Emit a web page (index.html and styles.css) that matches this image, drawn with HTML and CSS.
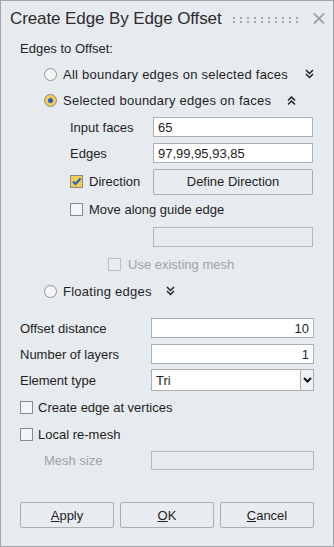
FILE: index.html
```html
<!DOCTYPE html>
<html>
<head>
<meta charset="utf-8">
<link rel="stylesheet" href="styles.css">
</head>
<body>
<div class="win">
  <div class="titlebar">
    <span class="title">Create Edge By Edge Offset</span>
    <svg class="grip" width="70" height="6" viewBox="0 0 70 6">
      <defs><pattern id="dots" width="7" height="4" patternUnits="userSpaceOnUse"><rect width="2" height="2" fill="#a3a8ad"/></pattern></defs>
      <rect width="70" height="6" fill="url(#dots)"/>
    </svg>
    <svg class="close" width="12" height="11" viewBox="0 0 12 11"><path d="M1 0.5 L11 10.5 M11 0.5 L1 10.5" stroke="#9ea3a8" stroke-width="1.8" fill="none"/></svg>
  </div>
  <div class="content">
    <div class="row section">Edges to Offset:</div>

    <div class="row radio-row r1">
      <span class="radio"></span><span class="rlabel">All boundary edges on selected faces</span>
      <svg class="chev c1" width="9" height="10" viewBox="0 0 9 10"><path d="M1 1 L4.5 4.5 L8 1 M1 5 L4.5 8.5 L8 5" stroke="#222" stroke-width="1.5" fill="none"/></svg>
    </div>
    <div class="row radio-row r2">
      <span class="radio on"></span><span class="rlabel">Selected boundary edges on faces</span>
      <svg class="chev c2" width="9" height="10" viewBox="0 0 9 10"><path d="M1 4.5 L4.5 1 L8 4.5 M1 8.5 L4.5 5 L8 8.5" stroke="#222" stroke-width="1.5" fill="none"/></svg>
    </div>

    <div class="row sub-field">
      <span class="sublabel">Input faces</span><span class="input">65</span>
    </div>
    <div class="row sub-field">
      <span class="sublabel">Edges</span><span class="input">97,99,95,93,85</span>
    </div>
    <div class="row dir-row">
      <span class="check on"><svg width="11" height="11" viewBox="0 0 11 11"><path d="M2 5.5 L4.5 8 L9.5 2.5" stroke="#1f5fc4" stroke-width="2" fill="none"/></svg></span>
      <span class="clabel dir-label">Direction</span>
      <span class="btn dir-btn">Define Direction</span>
    </div>
    <div class="row move-row">
      <span class="check"></span><span class="clabel">Move along guide edge</span>
    </div>
    <div class="row guide-row">
      <span class="input disabled"></span>
    </div>
    <div class="row use-row">
      <span class="check disabled"></span><span class="clabel grey">Use existing mesh</span>
    </div>
    <div class="row radio-row r3">
      <span class="radio"></span><span class="rlabel">Floating edges</span>
      <svg class="chev c3" width="9" height="10" viewBox="0 0 9 10"><path d="M1 1 L4.5 4.5 L8 1 M1 5 L4.5 8.5 L8 5" stroke="#222" stroke-width="1.5" fill="none"/></svg>
    </div>

    <div class="row field first">
      <span class="flabel">Offset distance</span><span class="input num">10</span>
    </div>
    <div class="row field">
      <span class="flabel">Number of layers</span><span class="input num">1</span>
    </div>
    <div class="row field">
      <span class="flabel">Element type</span>
      <span class="select"><span class="sel-text">Tri</span><span class="sel-btn"><svg width="9" height="6" viewBox="0 0 9 6"><path d="M1 1 L4.5 4.5 L8 1" stroke="#111" stroke-width="2" fill="none"/></svg></span></span>
    </div>
    <div class="row opt-row o1">
      <span class="check"></span><span class="olabel">Create edge at vertices</span>
    </div>
    <div class="row opt-row o2">
      <span class="check"></span><span class="olabel">Local re-mesh</span>
    </div>
    <div class="row field mesh">
      <span class="flabel grey mesh-label">Mesh size</span><span class="input disabled"></span>
    </div>

    <div class="buttons">
      <span class="btn"><u>A</u>pply</span>
      <span class="btn"><u>O</u>K</span>
      <span class="btn"><u>C</u>ancel</span>
    </div>
  </div>
</div>
</body>
</html>
```

FILE: styles.css
```css
* { box-sizing: border-box; }
html, body { margin: 0; padding: 0; }
body {
  font-family: "Liberation Sans", Arial, sans-serif;
  font-size: 13px;
  color: #1e1e24;
}
.win {
  width: 334px;
  height: 547px;
  background: #e6ebef;
  border: 1px solid #a2a6aa;
}
.titlebar {
  height: 35px;
  display: flex;
  align-items: center;
  padding-left: 9px;
}
.title {
  font-size: 17px;
  color: #2c2c30;
  letter-spacing: -0.1px;
  margin-top: 1px;
}
.grip { margin-left: 11px; margin-top: 2px; }
.close { margin-left: 10px; margin-top: 0px; }

.content { padding: 0 19px; }
.row { display: flex; align-items: center; white-space: nowrap; }
.section { height: 25px; }

.radio-row { height: 26px; padding-left: 24px; }
.r2 { height: 27px; }
.r3 { height: 32px; }
.radio {
  width: 13px; height: 13px;
  border-radius: 50%;
  border: 1px solid #8d9196;
  background: #f6f7f8;
  flex: none;
  display: flex; align-items: center; justify-content: center;
}
.radio.on { background: #f2cd55; border-color: #8a8a80; }
.radio.on::after {
  content: "";
  width: 5px; height: 5px; border-radius: 50%;
  background: #1f5fc4;
}
.rlabel { margin-left: 6px; letter-spacing: 0.25px; }
.chev { flex: none; }
.c1 { margin-left: 17px; }
.c2 { margin-left: 16px; }
.c3 { margin-left: 14px; }

.sub-field { height: 26px; padding-left: 50px; }
.sublabel { width: 83px; flex: none; }
.input {
  display: flex; align-items: center;
  height: 20px;
  flex: 1;
  background: #ffffff;
  border: 1px solid #acb0b4;
  padding: 0 4px;
  margin-right: 1px;
}
.input.num { justify-content: flex-end; margin-right: 0; }
.input.disabled { background: #e6ebef; border-color: #b4b8bc; }

.check {
  width: 13px; height: 13px; flex: none;
  border: 1px solid #888c90;
  background: #f4f5f6;
  display: flex; align-items: center; justify-content: center;
}
.check.on { background: #f2cd55; border-color: #8a8a80; }
.check.disabled { border-color: #bcc0c4; background: #e9edf0; }
.clabel { margin-left: 6px; }
.grey { color: #a0a3a6; }

.dir-row { height: 31px; padding-left: 50px; }
.dir-label { width: 64px; flex: none; }
.btn {
  display: flex; align-items: center; justify-content: center;
  height: 26px;
  border: 1px solid #aaaeb2;
  border-radius: 2px;
  background: #e8ecf0;
}
.dir-btn { flex: 1; margin-right: 1px; }

.move-row { height: 24px; padding-left: 50px; }
.guide-row { height: 32px; padding-left: 133px; }
.use-row { height: 22px; padding-left: 88px; }
.use-row .clabel { margin-left: 7px; }

.field { height: 26px; }
.field.first { margin-top: 8px; }
.flabel { width: 131px; flex: none; }
.mesh-label { padding-left: 24px; }
.mesh .input { height: 19px; margin-right: 0; }
.select {
  flex: 1; height: 22px;
  display: flex;
  background: #fff;
  border: 1px solid #acb0b4;
}
.sel-text { flex: 1; display: flex; align-items: center; padding-left: 4px; }
.sel-btn {
  width: 13px; flex: none;
  border-left: 1px solid #acb0b4;
  background: #eef1f3;
  display: flex; align-items: center; justify-content: center;
}
.opt-row { height: 26px; }
.o1 { height: 28px; }
.olabel { margin-left: 5px; }

.buttons {
  margin-top: 29px;
  display: grid;
  grid-template-columns: 1fr 1fr 1fr;
  gap: 6px;
}
.buttons .btn { height: 26px; }
.buttons u { text-underline-offset: 1px; }
```
